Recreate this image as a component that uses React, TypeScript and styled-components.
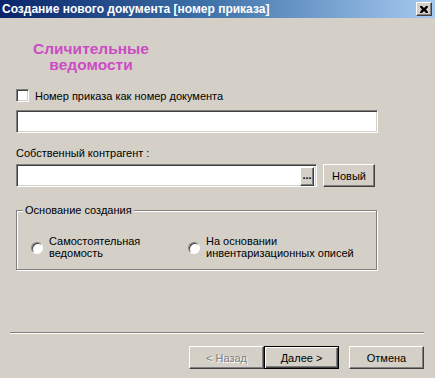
import React from 'react';
import styled, { createGlobalStyle, css } from 'styled-components';

const Global = createGlobalStyle`
  html, body {
    margin: 0;
    padding: 0;
    background: #d4d0c8;
  }
  * {
    box-sizing: border-box;
  }
`;

const sunken = css`
  border-style: solid;
  border-width: 1px;
  border-color: #808080 #ffffff #ffffff #808080;
  box-shadow: inset 1px 1px 0 #404040, inset -1px -1px 0 #d4d0c8;
`;

const raised = css`
  border-style: solid;
  border-width: 1px;
  border-color: #ffffff #404040 #404040 #ffffff;
  box-shadow: inset -1px -1px 0 #808080;
`;

const Window = styled.div`
  width: 435px;
  height: 378px;
  background: #d4d0c8;
  display: flex;
  flex-direction: column;
  font-family: 'Liberation Sans', Arial, sans-serif;
  font-size: 11px;
  color: #000;
  overflow: hidden;
`;

const TitleBar = styled.div`
  height: 18px;
  background: linear-gradient(90deg, #0a246a 0%, #3a6ea5 45%, #a6caf0 100%);
  display: flex;
  align-items: center;
  justify-content: space-between;
  padding: 0 3px 0 2px;
`;

const TitleText = styled.span`
  color: #fff;
  font-weight: 700;
  font-size: 12px;
  white-space: nowrap;
`;

const CloseButton = styled.div`
  width: 16px;
  height: 14px;
  background: #d4d0c8;
  ${raised};
  display: flex;
  align-items: center;
  justify-content: center;
`;

const Body = styled.div`
  flex: 1;
  padding: 23px 0 0 16px;
  display: flex;
  flex-direction: column;
`;

const Heading = styled.div`
  width: 150px;
  text-align: center;
  color: #cc4cc4;
  font-weight: 700;
  font-size: 15.5px;
  line-height: 16px;
`;

const CheckRow = styled.label`
  margin-top: 16px;
  display: flex;
  align-items: center;
  gap: 6px;
  height: 13px;
`;

const CheckBox = styled.span`
  width: 13px;
  height: 13px;
  background: #fff;
  ${sunken};
`;

const TextBox = styled.div<{ $width: number }>`
  width: ${(p) => p.$width}px;
  height: 23px;
  background: #fff;
  ${sunken};
  display: flex;
  justify-content: flex-end;
  padding: 2px;
`;

const FieldLabel = styled.div`
  margin-top: 14px;
  line-height: 13px;
`;

const PickRow = styled.div`
  margin-top: 4px;
  display: flex;
  gap: 6px;
`;

const DotsButton = styled.div`
  width: 14px;
  height: 19px;
  background: #d4d0c8;
  ${raised};
  display: flex;
  align-items: center;
  justify-content: center;
  font-weight: 700;
  font-size: 11px;
  line-height: 11px;
  padding-bottom: 3px;
`;

const Button = styled.div<{ $w: number; $default?: boolean; $disabled?: boolean }>`
  width: ${(p) => p.$w}px;
  height: 23px;
  background: #d4d0c8;
  display: flex;
  align-items: center;
  justify-content: center;
  ${(p) =>
    p.$default
      ? css`
          border: 1px solid #000;
          box-shadow: inset 1px 1px 0 #fff, inset -1px -1px 0 #404040, inset -2px -2px 0 #808080;
        `
      : raised};
  ${(p) =>
    p.$disabled &&
    css`
      color: #808080;
      text-shadow: 1px 1px 0 #fff;
    `}
`;

const GroupBox = styled.div`
  position: relative;
  margin-top: 23px;
  width: 361px;
  height: 60px;
  border: 1px solid #808080;
  box-shadow: 1px 1px 0 #fff, inset 1px 1px 0 #fff;
  display: flex;
  padding: 13px 0 0 14px;
`;

const GroupTitle = styled.span`
  position: absolute;
  top: -7px;
  left: 6px;
  padding: 0 2px;
  background: #d4d0c8;
  line-height: 13px;
`;

const RadioOption = styled.div<{ $w: number }>`
  width: ${(p) => p.$w}px;
  display: flex;
  align-items: center;
  gap: 6px;
  line-height: 12px;
`;

const Radio = styled.span`
  flex: none;
  width: 12px;
  height: 12px;
  border-radius: 50%;
  background: #fff;
  border: 1px solid;
  border-color: #808080 #fff #fff #808080;
  box-shadow: inset 1px 1px 0 #404040;
  margin-top: 2px;
`;

const Footer = styled.div`
  padding: 0 11px 9px 10px;
`;

const Separator = styled.div`
  height: 2px;
  border-top: 1px solid #808080;
  border-bottom: 1px solid #fff;
`;

const ButtonRow = styled.div`
  margin-top: 12px;
  display: flex;
  justify-content: flex-end;
`;

const Gap = styled.div`
  width: 10px;
`;

export default function App() {
  return (
    <Window>
      <Global />
      <TitleBar>
        <TitleText>Создание нового документа [номер приказа]</TitleText>
        <CloseButton>
          <svg width="8" height="7" viewBox="0 0 8 7">
            <path d="M0 0h2l2 2 2-2h2v1L6 3.5 8 6v1H6L4 5 2 7H0V6l2-2.5L0 1z" fill="#000" />
          </svg>
        </CloseButton>
      </TitleBar>
      <Body>
        <Heading>
          Сличительные
          <br />
          ведомости
        </Heading>
        <CheckRow>
          <CheckBox />
          <span>Номер приказа как номер документа</span>
        </CheckRow>
        <div style={{ marginTop: 8 }}>
          <TextBox $width={362} />
        </div>
        <FieldLabel>Собственный контрагент :</FieldLabel>
        <PickRow>
          <TextBox $width={301}>
            <DotsButton>...</DotsButton>
          </TextBox>
          <Button $w={52}>Новый</Button>
        </PickRow>
        <GroupBox>
          <GroupTitle>Основание создания</GroupTitle>
          <RadioOption $w={157}>
            <Radio />
            <span>
              Самостоятельная
              <br />
              ведомость
            </span>
          </RadioOption>
          <RadioOption $w={180}>
            <Radio />
            <span>
              На основании
              <br />
              инвентаризационных описей
            </span>
          </RadioOption>
        </GroupBox>
      </Body>
      <Footer>
        <Separator />
        <ButtonRow>
          <Button $w={75} $disabled>
            &lt; Назад
          </Button>
          <Button $w={75} $default>
            Далее &gt;
          </Button>
          <Gap />
          <Button $w={75}>Отмена</Button>
        </ButtonRow>
      </Footer>
    </Window>
  );
}
